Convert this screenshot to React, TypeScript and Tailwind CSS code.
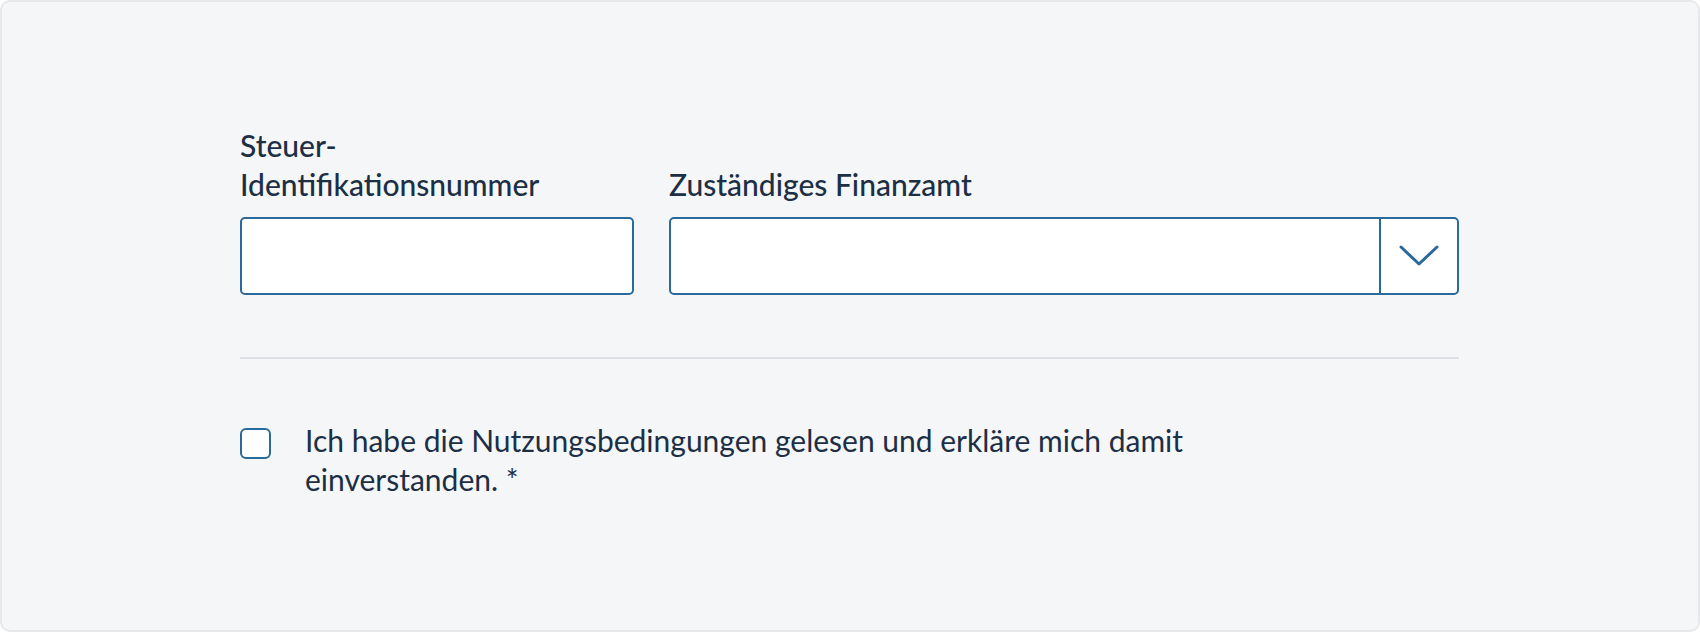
export default function App() {
  return (
    <div className="w-full h-[632px] bg-white">
      <div
        className="h-full w-full rounded-[10px] border-2 border-[#e6e8eb] bg-[#f5f6f8] text-[#1c2f45]"
        style={{ fontFamily: "Lato, 'Noto Sans', sans-serif" }}
      >
        <div className="pl-[238px] pr-[239px] pt-[124px]">
          <div className="grid grid-cols-[394px_1fr] gap-x-[35px]">
            <div className="flex flex-col">
              <label className="text-[30px] leading-[39px] font-medium">
                Steuer-
                <br />
                Identifikationsnummer
              </label>
              <input
                type="text"
                className="mt-[13px] h-[78px] w-full rounded-[5px] border-2 border-[#2a6a9a] bg-white outline-none"
              />
            </div>
            <div className="flex flex-col justify-end">
              <label className="text-[30px] leading-[39px] font-medium">Zuständiges Finanzamt</label>
              <div className="mt-[13px] flex h-[78px] w-full overflow-hidden rounded-[5px] border-2 border-[#2a6a9a] bg-white">
                <div className="flex-1" />
                <div className="flex w-[78px] items-center justify-center border-l-2 border-[#2a6a9a]">
                  <svg width="40" height="22" viewBox="0 0 40 22" fill="none">
                    <path d="M2 2 L20 19 L38 2" stroke="#2a6a9a" strokeWidth="3" strokeLinecap="round" strokeLinejoin="round" />
                  </svg>
                </div>
              </div>
            </div>
          </div>

          <div className="mt-[62px] h-[2px] w-full bg-[#dcdfe4]" />

          <div className="mt-[62px] flex items-start gap-[34px]">
            <div className="mt-[7px] h-[31px] w-[31px] shrink-0 rounded-[6px] border-2 border-[#2a6a9a] bg-white" />
            <p className="max-w-[920px] text-[30px] leading-[39px]">
              Ich habe die Nutzungsbedingungen gelesen und erkläre mich damit einverstanden. *
            </p>
          </div>
        </div>
      </div>
    </div>
  );
}
